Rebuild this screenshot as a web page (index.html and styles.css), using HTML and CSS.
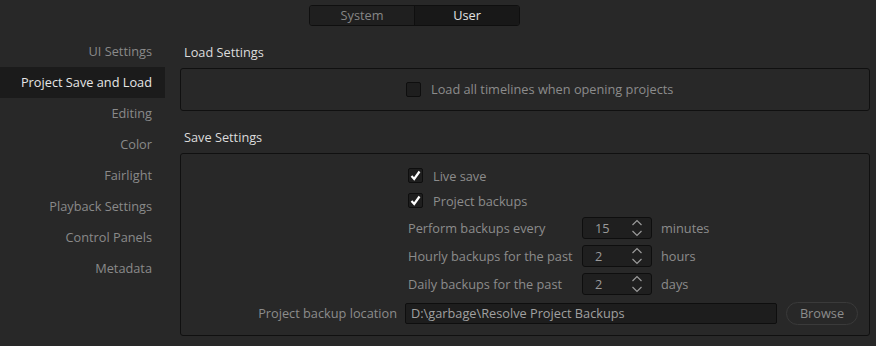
FILE: index.html
```html
<!DOCTYPE html>
<html lang="en">
<head>
    <meta charset="UTF-8">
    <title>Preferences</title>
    <link rel="stylesheet" href="styles.css">
</head>
<body>

    <!-- System / User switch -->
    <div class="tabs">
        <span class="tab">System</span>
        <span class="tab active">User</span>
    </div>

    <div class="main">
        <nav class="sidebar">
            <a href="#">UI Settings</a>
            <a href="#" class="active">Project Save and Load</a>
            <a href="#">Editing</a>
            <a href="#">Color</a>
            <a href="#">Fairlight</a>
            <a href="#">Playback Settings</a>
            <a href="#">Control Panels</a>
            <a href="#">Metadata</a>
        </nav>

        <div class="content">
            <!-- Load Settings -->
            <h2>Load Settings</h2>
            <div class="box load-box">
                <label class="check"><span class="checkbox"></span>Load all timelines when opening projects</label>
            </div>

            <!-- Save Settings -->
            <h2 class="second">Save Settings</h2>
            <div class="box save-box">
                <div class="col">
                    <label class="check row"><span class="checkbox"><svg width="13" height="13" viewBox="0 0 13 13"><path d="M2.5 7 L5.2 10 L10.5 2.5" fill="none" stroke="#ffffff" stroke-width="2.2"/></svg></span>Live save</label>
                    <label class="check row"><span class="checkbox"><svg width="13" height="13" viewBox="0 0 13 13"><path d="M2.5 7 L5.2 10 L10.5 2.5" fill="none" stroke="#ffffff" stroke-width="2.2"/></svg></span>Project backups</label>

                    <div class="spin-row">
                        <span class="label">Perform backups every</span>
                        <span class="spin">15
                            <svg class="arrows" width="12" height="18" viewBox="0 0 12 18"><path d="M1.5 6 L6 1.5 L10.5 6 M1.5 12 L6 16.5 L10.5 12" fill="none" stroke="#9a9a9a" stroke-width="1.2"/></svg>
                        </span>
                        <span class="unit">minutes</span>
                    </div>
                    <div class="spin-row">
                        <span class="label">Hourly backups for the past</span>
                        <span class="spin">2
                            <svg class="arrows" width="12" height="18" viewBox="0 0 12 18"><path d="M1.5 6 L6 1.5 L10.5 6 M1.5 12 L6 16.5 L10.5 12" fill="none" stroke="#9a9a9a" stroke-width="1.2"/></svg>
                        </span>
                        <span class="unit">hours</span>
                    </div>
                    <div class="spin-row">
                        <span class="label">Daily backups for the past</span>
                        <span class="spin">2
                            <svg class="arrows" width="12" height="18" viewBox="0 0 12 18"><path d="M1.5 6 L6 1.5 L10.5 6 M1.5 12 L6 16.5 L10.5 12" fill="none" stroke="#9a9a9a" stroke-width="1.2"/></svg>
                        </span>
                        <span class="unit">days</span>
                    </div>
                </div>

                <div class="location">
                    <span class="loc-label">Project backup location</span>
                    <input type="text" class="path" value="D:\garbage\Resolve Project Backups">
                    <button class="browse">Browse</button>
                </div>
            </div>
        </div>
    </div>

</body>
</html>
```

FILE: styles.css
```css
/* Base */
body {
    margin: 0;
    font-family: 'Open Sans', 'Noto Sans', sans-serif;
    font-size: 12.75px;
    background: #282828;
    color: #8c8c8c;
}

/* Top switch */
.tabs {
    display: flex;
    margin: 5px 0 0 309px;
    width: 209px;
    height: 19px;
    border: 1px solid #0f0f0f;
    border-radius: 3px;
    overflow: hidden;
}

.tab {
    flex: 1;
    text-align: center;
    line-height: 19px;
    background: #1f1f1f;
    color: #868686;
}

.tab.active {
    background: #181818;
    color: #e2e2e2;
    border-left: 1px solid #0f0f0f;
}

/* Layout */
.main {
    display: flex;
    padding-top: 10px;
}

.sidebar {
    width: 165px;
    display: flex;
    flex-direction: column;
}

.sidebar a {
    height: 31px;
    line-height: 31px;
    text-align: right;
    padding-right: 13px;
    color: #8a8a8a;
    text-decoration: none;
}

.sidebar a.active {
    background: #1b1b1b;
    color: #e6e6e6;
}

.content {
    flex: 1;
    margin: 0 6px 0 15px;
}

h2 {
    margin: 0;
    padding: 6px 0 6px 4px;
    font-size: 12.75px;
    font-weight: normal;
    line-height: 20px;
    color: #dcdcdc;
}

h2.second {
    padding-top: 16px;
}

.box {
    border: 1px solid #101010;
    border-radius: 3px;
}

/* Checkboxes */
.check {
    display: flex;
    align-items: center;
    gap: 10px;
}

.checkbox {
    width: 13px;
    height: 13px;
    background: #1e1e1e;
    border: 1px solid #0e0e0e;
    border-radius: 2px;
    display: flex;
}

.load-box {
    height: 41px;
    display: flex;
    align-items: center;
    padding-left: 225px;
}

.load-box .check {
    padding-bottom: 1px;
}

/* Save settings */
.save-box {
    padding: 9px 0 7px 0;
}

.col {
    margin-left: 227px;
}

.row {
    height: 25px;
}

.spin-row {
    display: flex;
    align-items: center;
    height: 28px;
}

.spin-row:first-of-type {
    margin-top: 1px;
}

.label {
    width: 174px;
}

.spin {
    position: relative;
    box-sizing: border-box;
    width: 70px;
    height: 22px;
    line-height: 20px;
    padding-left: 12px;
    background: #1f1f1f;
    border: 1px solid #0e0e0e;
    border-radius: 3px;
    color: #9a9a9a;
}

.arrows {
    position: absolute;
    right: 8px;
    top: 1px;
}

.unit {
    margin-left: 9px;
}

.location {
    display: flex;
    align-items: center;
    height: 30px;
}

.loc-label {
    width: 216px;
    text-align: right;
    margin-right: 8px;
}

.path {
    box-sizing: border-box;
    width: 372px;
    height: 21px;
    padding: 0 5px;
    font-family: inherit;
    font-size: 12.75px;
    color: #a0a0a0;
    background: #1d1d1d;
    border: 1px solid #0e0e0e;
    border-radius: 2px;
    outline: none;
}

.browse {
    margin-left: 9px;
    width: 72px;
    height: 23px;
    font-family: inherit;
    font-size: 12.75px;
    color: #8c8c8c;
    background: #282828;
    border: 1px solid #3a3a3a;
    border-radius: 12px;
    padding: 0;
}
```
